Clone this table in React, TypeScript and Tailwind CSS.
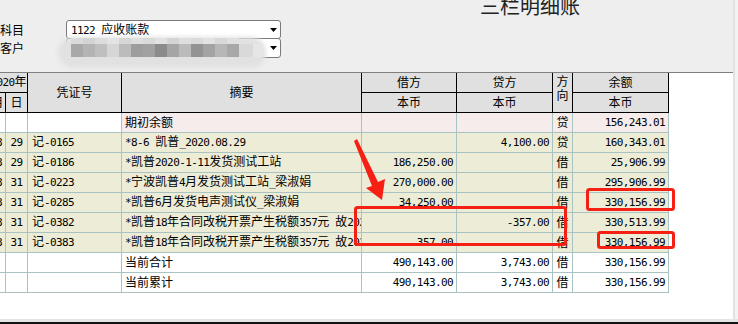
import React from 'react';

const mono = "font-['DejaVu_Sans_Mono',monospace] text-[11px] tracking-[-0.6px]";

// SimSun-like mix: half-width ascii runs, full-width CJK runs
function Mix({ s }: { s: string }) {
  const parts = s.match(/[\x00-\x7f]+|[^\x00-\x7f]+/g) ?? [];
  return (
    <>
      {parts.map((p, i) =>
        /^[\x00-\x7f]/.test(p) ? (
          <span key={i} className={mono}>{p}</span>
        ) : (
          <span key={i}>{p}</span>
        )
      )}
    </>
  );
}

type Row = {
  m: string;
  d: string;
  v: string;
  s: string;
  dr: string;
  cr: string;
  dir: string;
  bal: string;
  tone: 'open' | 'entry' | 'total';
};

const longText = '*凯普18年合同改税开票产生税额357元 故2020年调整';

const rows: Row[] = [
  { m: '', d: '', v: '', s: '期初余额', dr: '', cr: '', dir: '贷', bal: '156,243.01', tone: 'open' },
  { m: '08', d: '29', v: '记-0165', s: '*8-6 凯普_2020.08.29', dr: '', cr: '4,100.00', dir: '贷', bal: '160,343.01', tone: 'entry' },
  { m: '08', d: '29', v: '记-0186', s: '*凯普2020-1-11发货测试工站', dr: '186,250.00', cr: '', dir: '借', bal: '25,906.99', tone: 'entry' },
  { m: '08', d: '31', v: '记-0223', s: '*宁波凯普4月发货测试工站_梁淑娟', dr: '270,000.00', cr: '', dir: '借', bal: '295,906.99', tone: 'entry' },
  { m: '08', d: '31', v: '记-0285', s: '*凯普6月发货电声测试仪_梁淑娟', dr: '34,250.00', cr: '', dir: '借', bal: '330,156.99', tone: 'entry' },
  { m: '08', d: '31', v: '记-0382', s: longText, dr: '', cr: '-357.00', dir: '借', bal: '330,513.99', tone: 'entry' },
  { m: '08', d: '31', v: '记-0383', s: longText, dr: '-357.00', cr: '', dir: '借', bal: '330,156.99', tone: 'entry' },
  { m: '', d: '', v: '', s: '当前合计', dr: '490,143.00', cr: '3,743.00', dir: '借', bal: '330,156.99', tone: 'total' },
  { m: '', d: '', v: '', s: '当前累计', dr: '490,143.00', cr: '3,743.00', dir: '借', bal: '330,156.99', tone: 'total' },
];

const mosaic = ['#a8a8a8', '#b4b4b4', '#bfbfbf', '#d6d6d6', '#bcbcbc', '#9d9d9d', '#a1a1a1', '#8b8b8b', '#a5a5a5', '#bbbbbb', '#939393', '#a3a3a3', '#b7b7b7', '#a8a8a8'];
const mosaicTop = ['#dadada', '#d3d3d3', '#dcdcdc', '#e3e3e3', '#d6d6d6', '#dedede', '#d9d9d9', '#e1e1e1', '#d4d4d4', '#dfdfdf', '#dadada', '#e2e2e2', '#d8d8d8', '#e0e0e0'];

function Select({ text }: { text?: string }) {
  return (
    <div className="flex h-full w-[215px] items-center rounded-[3px] border border-[#7a7a7a] bg-white pl-[4px]">
      {text && <span className="leading-none"><Mix s={text} /></span>}
      <svg className="ml-auto mr-[3px]" width="7" height="4" viewBox="0 0 7 4">
        <polygon points="0,0 7,0 3.5,4" fill="#000" />
      </svg>
    </div>
  );
}

const th = 'border border-black bg-[#e0e0e0] p-0 text-center font-normal leading-[14px]';
const td = 'overflow-hidden whitespace-nowrap border border-[#a9c3c3] p-0 leading-[14px]';

export default function App() {
  return (
    <div className="relative h-[324px] w-[738px] overflow-hidden bg-[#e4e4e4] font-['Noto_Sans_CJK_SC',sans-serif] text-[12px] text-black">
      <div className="flex h-[319px]">
        <div className="flex w-[733px] flex-col">
          <div className="flex h-[72px] shrink-0 bg-[#eeeeee]">
            <div className="flex flex-col pt-[20px]">
              <div className="flex h-[19px] items-center">
                <span className="w-[66px] leading-none">科目</span>
                <Select text="1122 应收账款" />
              </div>
              <div className="-mt-px flex h-[20px] items-center">
                <span className="w-[66px] leading-none">客户</span>
                <Select />
              </div>
            </div>
            <div className="-mt-[4px] ml-[199px] text-[20px] leading-[20px] text-[#222]">三栏明细账</div>
          </div>

          <div className="flex-1 overflow-hidden border-t border-[#7f7f7f] bg-white">
            <table className="-ml-[11px] w-[679px] table-fixed border-collapse">
              <colgroup>
                <col className="w-[16px]" />
                <col className="w-[22px]" />
                <col className="w-[94px]" />
                <col className="w-[240px]" />
                <col className="w-[95px]" />
                <col className="w-[96px]" />
                <col className="w-[20px]" />
                <col className="w-[96px]" />
              </colgroup>
              <thead>
                <tr className="h-[19px]">
                  <th colSpan={2} className={`${th} border-t-0 whitespace-nowrap`}><Mix s="2020年" /></th>
                  <th rowSpan={2} className={`${th} border-t-0`}>凭证号</th>
                  <th rowSpan={2} className={`${th} border-t-0`}>摘要</th>
                  <th className={`${th} border-t-0`}>借方</th>
                  <th className={`${th} border-t-0`}>贷方</th>
                  <th rowSpan={2} className={`${th} border-t-0 pt-px align-top leading-[12px]`}>方<br />向</th>
                  <th className={`${th} border-t-0`}>余额</th>
                </tr>
                <tr className="h-[20px]">
                  <th className={th}>月</th>
                  <th className={th}>日</th>
                  <th className={th}>本币</th>
                  <th className={th}>本币</th>
                  <th className={th}>本币</th>
                </tr>
              </thead>
              <tbody>
                {rows.map((r, i) => {
                  const lead = r.tone === 'entry' ? 'bg-[#edecd6]' : 'bg-white';
                  const rest = r.tone === 'entry' ? 'bg-[#edecd6]' : r.tone === 'open' ? 'bg-[#f6ecec]' : 'bg-white';
                  return (
                    <tr key={i} className="h-[20px]">
                      <td className={`${td} ${lead} pr-[6px] text-right`}><Mix s={r.m} /></td>
                      <td className={`${td} ${lead} text-center`}><Mix s={r.d} /></td>
                      <td className={`${td} ${lead} pl-[4px]`}><Mix s={r.v} /></td>
                      <td className={`${td} ${rest} pl-[3px]`}><Mix s={r.s} /></td>
                      <td className={`${td} ${rest} pr-[3px] text-right`}><Mix s={r.dr} /></td>
                      <td className={`${td} ${rest} pr-[3px] text-right`}><Mix s={r.cr} /></td>
                      <td className={`${td} ${rest} text-center`}>{r.dir}</td>
                      <td className={`${td} ${rest} pr-[3px] text-right`}><Mix s={r.bal} /></td>
                    </tr>
                  );
                })}
              </tbody>
            </table>
          </div>
        </div>
        <div className="w-[5px] border-l-2 border-[#e2e2e2] bg-[#f3f3f3]" />
      </div>
      <div className="h-[3px] bg-[#e4e4e4]" />
      <div className="h-[2px] bg-[#111]" />

      {/* privacy blur over the customer combo */}
      <div className="absolute left-[58px] top-[37px] h-[31px] w-[208px] rounded-[16px] bg-[#e1e1e1] blur-[2px]" />
      <div className="absolute left-[71px] top-[38px] flex">
        {mosaicTop.map((c, i) => (
          <div key={i} className="h-[6px] w-[12px]" style={{ backgroundColor: c }} />
        ))}
      </div>
      <div className="absolute left-[71px] top-[44px] flex">
        {mosaic.map((c, i) => (
          <div key={i} className="h-[13px] w-[12px]" style={{ backgroundColor: c }} />
        ))}
        <div className="h-[13px] w-[14px] bg-[#d9d9d9]" />
        <div className="h-[13px] w-[10px] bg-[#e6e6e6]" />
      </div>

      {/* red annotations */}
      <svg className="pointer-events-none absolute left-0 top-0" width="738" height="324" viewBox="0 0 738 324">
        <polygon points="354,141 357,139 378,182 385,179 382,200 366,188 372,186" fill="#f61f14" />
        <rect x="355.5" y="207.5" width="210" height="37" rx="2" fill="none" stroke="#f61f14" strokeWidth="3" />
        <rect x="587.5" y="189.5" width="86" height="20" rx="2" fill="none" stroke="#f61f14" strokeWidth="3" />
        <rect x="598.5" y="232.5" width="75" height="15" rx="2" fill="none" stroke="#f61f14" strokeWidth="3" />
      </svg>
    </div>
  );
}
